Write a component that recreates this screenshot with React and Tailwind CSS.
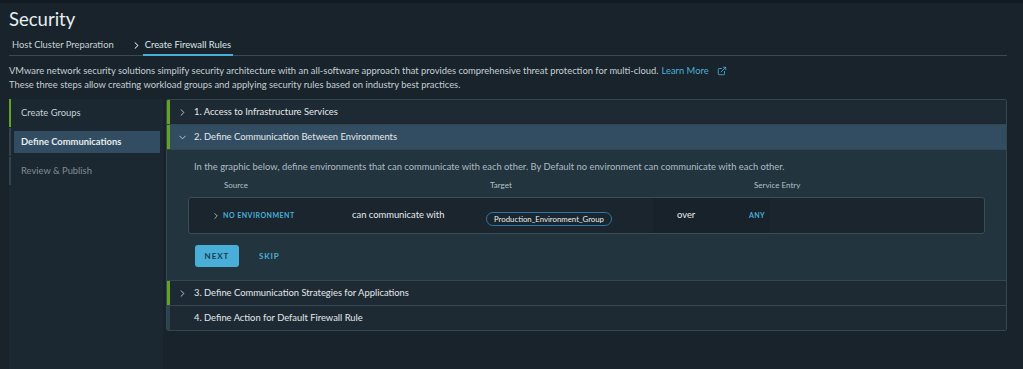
import React from "react";
import { ChevronRight, ChevronDown, ExternalLink } from "lucide-react";

const steps = [
  { name: "Create Groups", done: true },
  { name: "Define Communications", active: true },
  { name: "Review & Publish" },
];

const Row = ({ title, open, bar = "green", children }) => (
  <div className="border-b border-[#34464f] last:border-b-0">
    <div
      className={`flex items-center h-[24px] border-l-[3px] ${
        bar === "green" ? "border-[#62a420]" : "border-[#2e4350]"
      } ${open ? "bg-[#324d61]" : "bg-[#1e2a33]"}`}
    >
      <div className="w-[24px] flex justify-center">
        {title.startsWith("4") ? null : open ? (
          <ChevronDown size={11} strokeWidth={2} className="text-[#c7d1d6]" />
        ) : (
          <ChevronRight size={11} strokeWidth={2} className="text-[#c7d1d6]" />
        )}
      </div>
      <span className="text-[9.4px] text-[#e2e8eb]">{title}</span>
    </div>
    {children}
  </div>
);

export default function App() {
  return (
    <div className="w-[1023px] h-[369px] bg-[#18232b] overflow-hidden font-['Lato',sans-serif] flex flex-col">
      <div className="h-[3px] bg-[#121b21]" />
      <div className="pl-[9px] pr-[16px]">
        <h1 className="text-[18.5px] leading-[22px] pt-[5px] text-[#e9eef1]">Security</h1>
        <div className="mt-[6px] flex items-end h-[20px] border-b border-[#3a4a53] text-[9.4px]">
          <div className="px-[3px] h-full flex items-center text-[#c9d3d8]">Host Cluster Preparation</div>
          <div className="ml-[14px] flex items-center h-full">
            <ChevronRight size={11} strokeWidth={2.2} className="text-[#dfe6ea] mr-[1px]" />
            <div className="h-full flex items-center border-b-[2px] border-[#49afd9] text-[#dfe6ea] px-[2px] -mb-[1px]">
              Create Firewall Rules
            </div>
          </div>
        </div>
        <div className="mt-[8px] text-[9.4px] leading-[14px] text-[#c5cfd4]">
          <p className="flex items-center">
            VMware network security solutions simplify security architecture with an all-software approach that provides comprehensive threat protection for multi-cloud.
            <span className="text-[#49afd9] ml-[3px]">Learn More</span>
            <ExternalLink size={10} className="text-[#49afd9] ml-[8px]" />
          </p>
          <p>These three steps allow creating workload groups and applying security rules based on industry best practices.</p>
        </div>
      </div>

      <div className="flex flex-1 mt-[7px] pl-[9px] pr-[16px]">
        <div className="w-[154px] bg-[#1c2831] shrink-0 text-[9.4px]">
          {steps.map((s, i) => (
            <div
              key={i}
              className={`h-[28px] flex items-center border-l-[2px] ${
                s.done ? "border-[#62a420]" : "border-[#33444e]"
              } ${i === 1 ? "mt-[1px] mb-[1px]" : ""}`}
            >
              {s.active ? (
                <div className="ml-[3px] mr-[3px] w-full h-[22px] bg-[#324d61] flex items-center pl-[7px] font-bold text-[#e6ecef]">
                  {s.name}
                </div>
              ) : (
                <span className={`pl-[10px] ${s.done ? "text-[#c6d0d5]" : "text-[#7f8c93]"}`}>{s.name}</span>
              )}
            </div>
          ))}
        </div>

        <div className="ml-[3px] flex-1 self-start border border-[#34464f] rounded-[2px] overflow-hidden">
          <Row title="1. Access to Infrastructure Services" />
          <Row title="2. Define Communication Between Environments" open>
            <div className="bg-[#22343e] h-[131px] pt-[10px] px-[21px] border-t border-[#34464f]">
              <p className="pl-[6px] text-[9.4px] text-[#aebbc2] leading-[14px]">
                In the graphic below, define environments that can communicate with each other. By Default no environment can communicate with each other.
              </p>
              <div className="flex mt-[5px] text-[8px] text-[#b4c0c6] leading-[12px]">
                <span className="w-[302px] pl-[36px]">Source</span>
                <span className="w-[264px]">Target</span>
                <span>Service Entry</span>
              </div>
              <div className="mt-[6px] h-[37px] bg-[#1a252d] border border-[#3b4d58] rounded-[3px] flex items-center pl-[20px]">
                <ChevronRight size={10} strokeWidth={2} className="text-[#b9c4ca] w-[14px]" />
                <span className="w-[129px] text-[7px] font-bold tracking-[0.07em] text-[#49afd9]">NO ENVIRONMENT</span>
                <span className="w-[134px] text-[9.4px] text-[#e4e9ec]">can communicate with</span>
                <div className="w-[167px]">
                  <span className="inline-flex items-center h-[14px] px-[7px] rounded-full border border-[#2b78ad] text-[7.8px] text-[#e9eef1]">
                    Production_Environment_Group
                  </span>
                </div>
                <div className="w-[117px] h-[35px] bg-[#18222a] flex items-center">
                  <span className="w-[96px] pl-[24px] text-[9.4px] text-[#e4e9ec]">over</span>
                  <span className="text-[7px] font-bold tracking-[0.06em] text-[#49afd9]">ANY</span>
                </div>
              </div>
              <div className="flex items-center mt-[11px] pl-[7px]">
                <button className="w-[44px] h-[22px] rounded-[3px] bg-[#49afd9] text-[8px] font-bold tracking-[0.12em] text-[#1c3b4c]">
                  NEXT
                </button>
                <span className="ml-[20px] text-[8px] font-bold tracking-[0.1em] text-[#49afd9]">SKIP</span>
              </div>
            </div>
          </Row>
          <Row title="3. Define Communication Strategies for Applications" />
          <Row title="4. Define Action for Default Firewall Rule" bar="grey" />
        </div>
      </div>
    </div>
  );
}
